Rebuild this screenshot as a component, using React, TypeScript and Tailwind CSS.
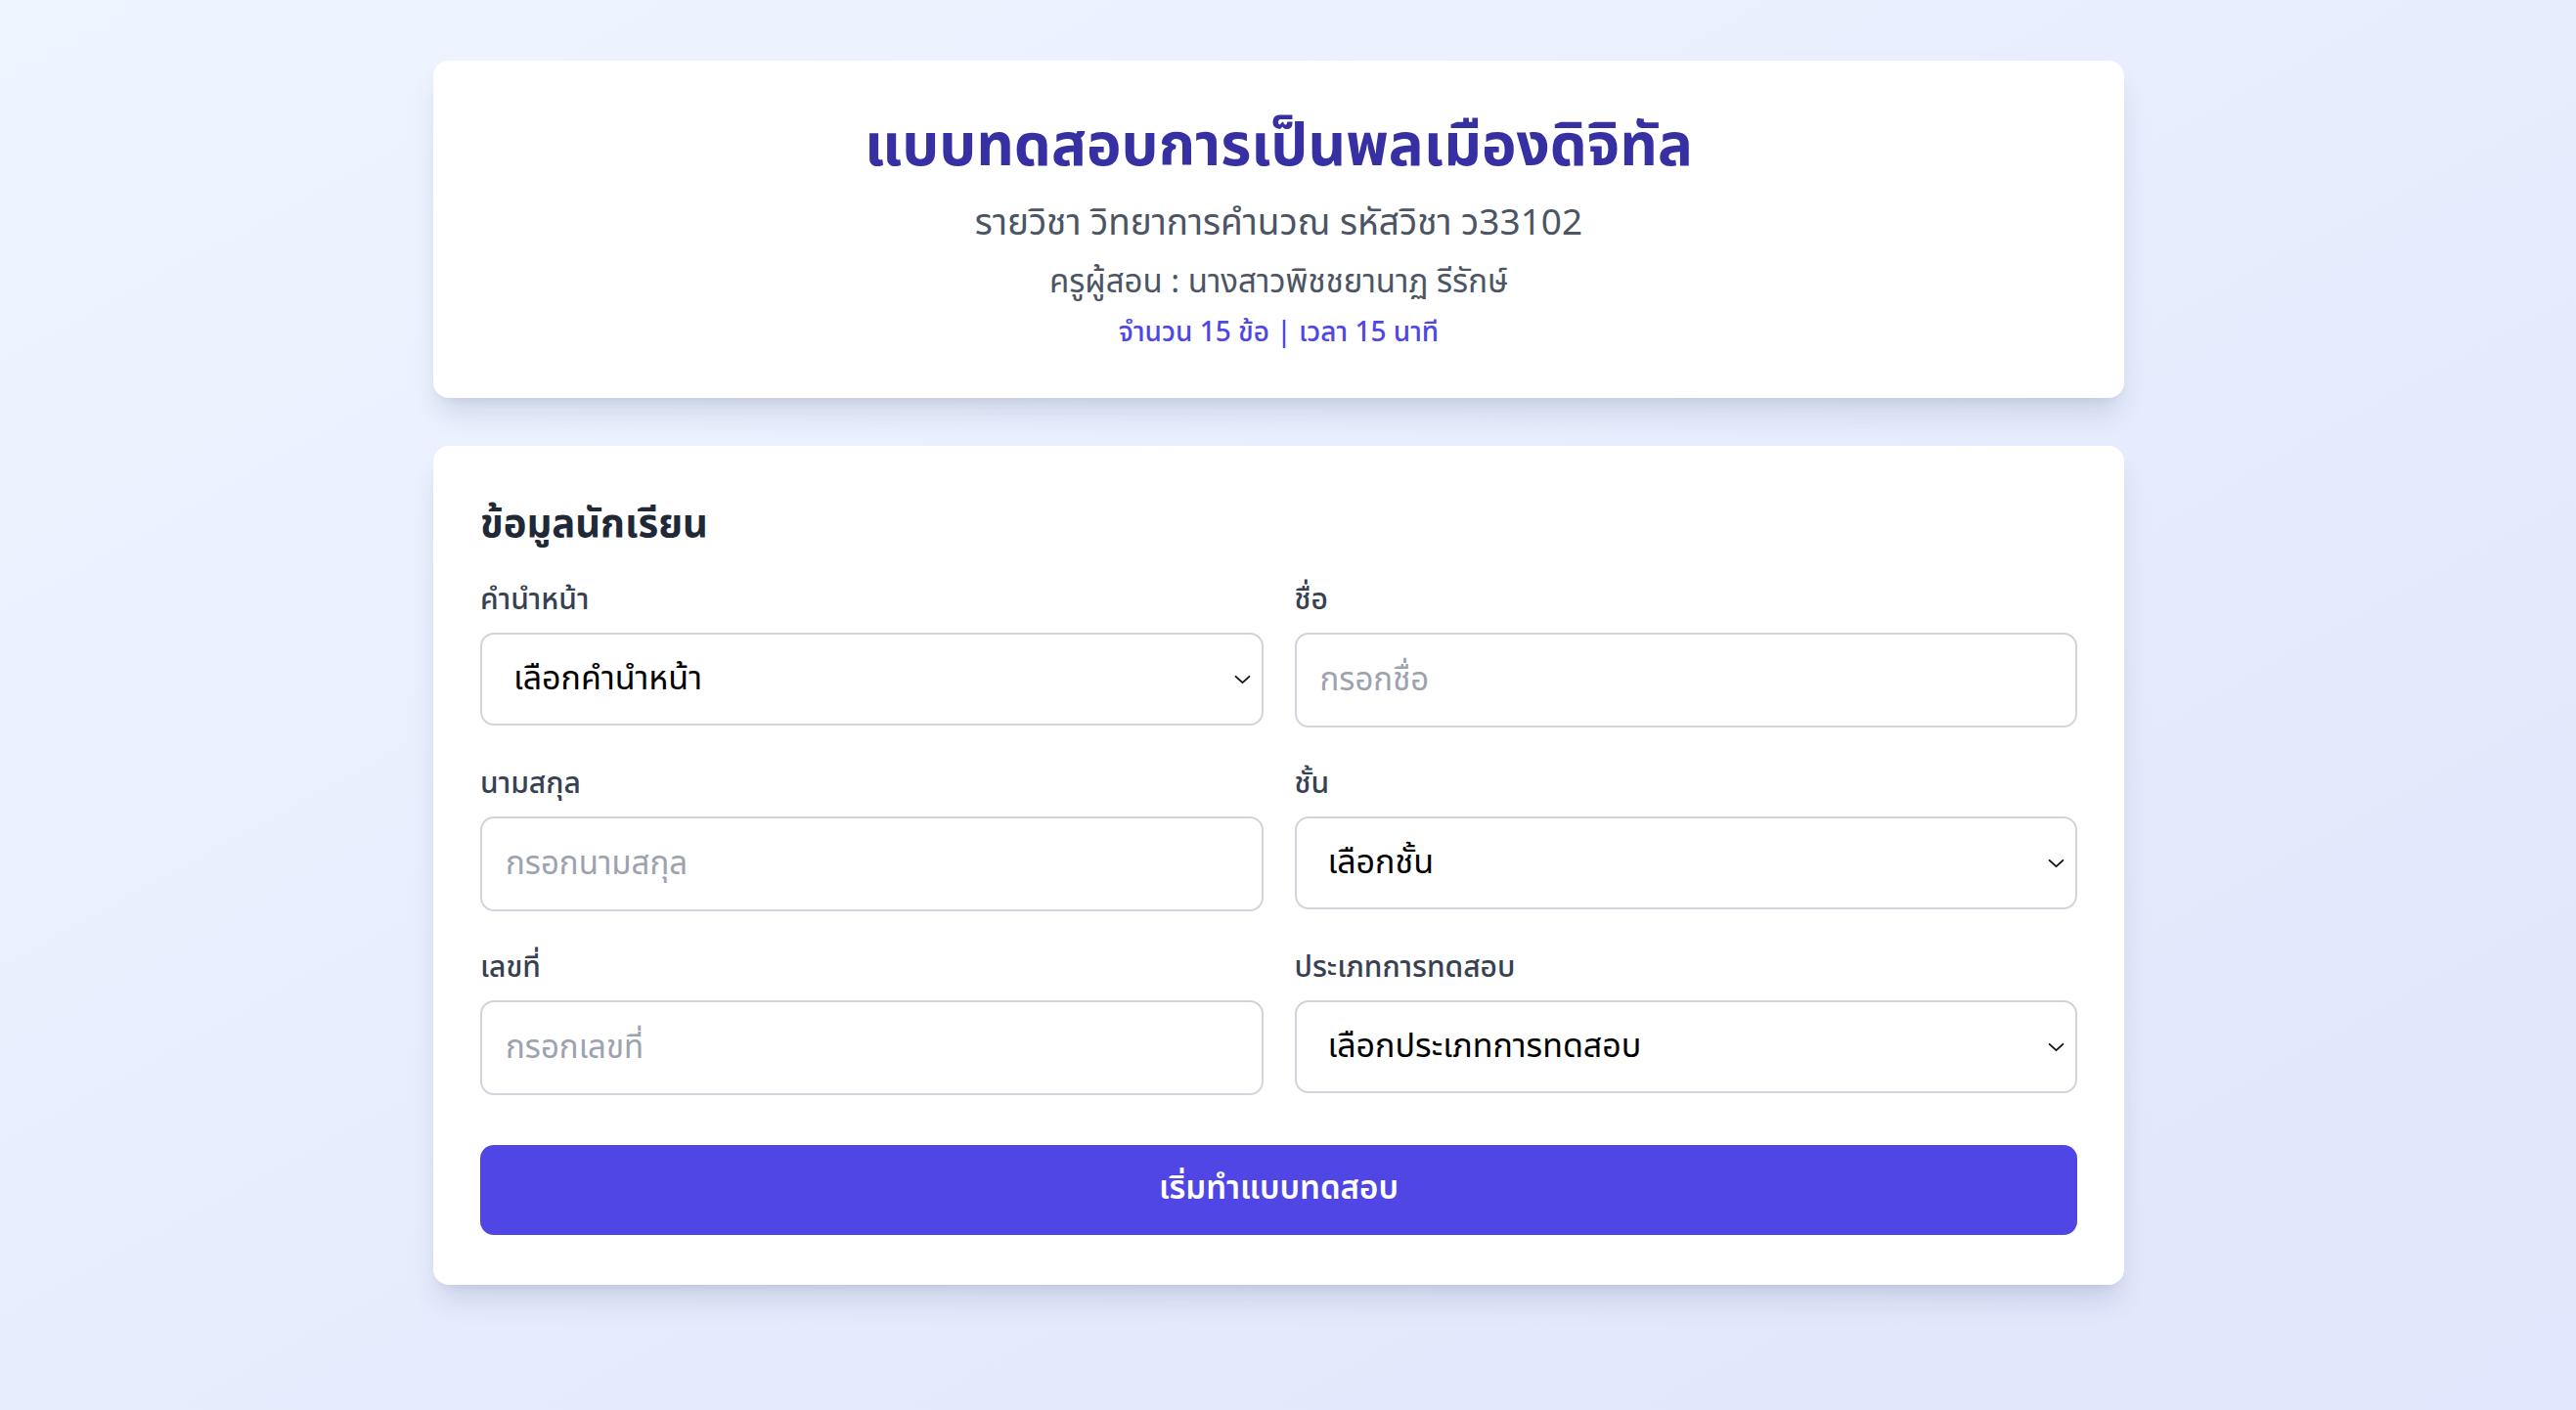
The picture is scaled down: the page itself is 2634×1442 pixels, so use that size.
import { useState } from "react";

const font = "font-['Noto_Sans_Thai','Noto_Sans','Liberation_Sans',sans-serif]";
const cardShadow = "shadow-[0_20px_30px_-6px_rgba(30,41,90,0.14),0_8px_12px_-8px_rgba(30,41,90,0.1)]";

function Chevron() {
  return (
    <svg viewBox="0 0 16 9" className="pointer-events-none absolute right-[13px] top-1/2 h-[10px] w-[17px] -translate-y-1/2" fill="none" stroke="#111" strokeWidth="1.7" strokeLinecap="round" strokeLinejoin="round">
      <path d="M1.5 1.5l6.5 6 6.5-6" />
    </svg>
  );
}

function SelectField({ label, placeholder, options }: { label: string; placeholder: string; options: string[] }) {
  const [value, setValue] = useState("");
  return (
    <div>
      <label className="mb-[13px] block text-[30px] leading-[40px] font-medium text-[#374151]">{label}</label>
      <div className="relative">
        <select
          value={value}
          onChange={(event) => setValue(event.target.value)}
          className="h-[95px] w-full appearance-none rounded-[14px] border-2 border-[#d1d5db] bg-white pl-[32px] pr-12 text-[34px] text-black outline-none"
        >
          <option value="">{placeholder}</option>
          {options.map((item) => (
            <option key={item} value={item}>{item}</option>
          ))}
        </select>
        <Chevron />
      </div>
    </div>
  );
}

function InputField({ label, placeholder }: { label: string; placeholder: string }) {
  return (
    <div>
      <label className="mb-[13px] block text-[30px] leading-[40px] font-medium text-[#374151]">{label}</label>
      <input
        placeholder={placeholder}
        className="h-[97px] w-full rounded-[14px] border-2 border-[#d1d5db] bg-white px-[24px] text-[33px] text-black outline-none placeholder:text-[#9ca3af]"
      />
    </div>
  );
}

export default function App() {
  return (
    <div className={`min-h-screen bg-linear-to-br from-[#eff5ff] via-[#e7edfd] to-[#e0e6fb] pr-[19px] pt-[62px] pb-[64px] ${font}`}>
      <div className="mx-auto w-[1729px]">
        <header className={`rounded-2xl bg-white px-12 pt-[51px] pb-[42px] text-center ${cardShadow}`}>
          <h1 className="text-[60px] leading-[76px] font-bold text-[#3730a3]">แบบทดสอบการเป็นพลเมืองดิจิทัล</h1>
          <p className="mt-[12px] text-[37px] leading-[56px] text-[#4b5563]">รายวิชา วิทยาการคำนวณ รหัสวิชา ว33102</p>
          <p className="mt-[4px] text-[33px] leading-[56px] text-[#4b5563]">ครูผู้สอน : นางสาวพิชชยานาฏ รีรักษ์</p>
          <p className="text-[28px] leading-[48px] font-medium text-[#4f46e5]">จำนวน 15 ข้อ | เวลา 15 นาที</p>
        </header>

        <section className={`mt-[49px] rounded-2xl bg-white px-12 pt-[53px] pb-[51px] ${cardShadow}`}>
          <h2 className="mb-[29px] text-[40px] leading-[56px] font-bold text-[#1f2937]">ข้อมูลนักเรียน</h2>
          <div className="grid grid-cols-2 gap-x-8 gap-y-[38px]">
            <SelectField label="คำนำหน้า" placeholder="เลือกคำนำหน้า" options={["นาย", "นางสาว", "เด็กชาย", "เด็กหญิง"]} />
            <InputField label="ชื่อ" placeholder="กรอกชื่อ" />
            <InputField label="นามสกุล" placeholder="กรอกนามสกุล" />
            <SelectField label="ชั้น" placeholder="เลือกชั้น" options={["ม.4", "ม.5", "ม.6"]} />
            <InputField label="เลขที่" placeholder="กรอกเลขที่" />
            <SelectField label="ประเภทการทดสอบ" placeholder="เลือกประเภทการทดสอบ" options={["ก่อนเรียน", "หลังเรียน"]} />
          </div>
          <button className="mt-[51px] h-[92px] w-full rounded-[14px] bg-[#4f46e5] text-[33px] font-semibold text-white">
            เริ่มทำแบบทดสอบ
          </button>
        </section>
      </div>
    </div>
  );
}
